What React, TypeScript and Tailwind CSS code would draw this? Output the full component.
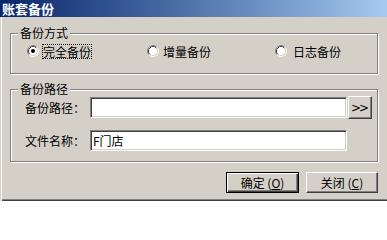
import React from "react";

const font = { fontFamily: '"Noto Sans CJK SC", "Liberation Sans", sans-serif' };

function Radio({ checked }: { checked?: boolean }) {
  return (
    <svg width="12" height="12" viewBox="0 0 12 12" className="shrink-0">
      <circle cx="6" cy="6" r="5" fill="#ffffff" />
      <path d="M2.11 9.89 A5.5 5.5 0 0 1 9.89 2.11" stroke="#808080" strokeWidth="1" fill="none" />
      <path d="M9.89 2.11 A5.5 5.5 0 0 1 2.11 9.89" stroke="#ffffff" strokeWidth="1" fill="none" />
      <path d="M2.82 9.18 A4.5 4.5 0 0 1 9.18 2.82" stroke="#404040" strokeWidth="1" fill="none" />
      <path d="M9.18 2.82 A4.5 4.5 0 0 1 2.82 9.18" stroke="#d4d0c8" strokeWidth="1" fill="none" />
      {checked && <circle cx="6" cy="6" r="2" fill="#000000" />}
    </svg>
  );
}

export default function App() {
  return (
    <div className="w-[387px] h-[201px] overflow-hidden bg-[#d4d0c8] text-[12px] text-black flex flex-col" style={font}>
      <div className="h-[17px] shrink-0 bg-gradient-to-r from-[#0a246a] to-[#a6caf0] flex items-center pl-[2px]">
        <span className="text-white font-bold text-[13px] leading-[13px]">账套备份</span>
      </div>
      <div className="flex-1 flex flex-col shadow-[inset_1px_0_0_#d4d0c8,inset_2px_0_0_#ffffff,inset_0_-1px_0_#404040,inset_0_-2px_0_#808080]">
        {/* Group 1 */}
        <div className="relative mt-[16px] ml-[10px] w-[368px] h-[41px] border border-[#808080] shadow-[inset_1px_1px_0_#ffffff,1px_1px_0_#ffffff]">
          <span className="absolute left-[7px] -top-[7px] px-[2px] bg-[#d4d0c8] leading-[12px]">备份方式</span>
          <div className="mt-[9px] pl-[16px] h-[16px] flex items-center">
            <div className="w-[120px] flex items-center">
              <Radio checked />
              <span className="ml-[3px] border border-dotted border-black leading-[13px]">完全备份</span>
            </div>
            <div className="w-[128px] flex items-center">
              <Radio />
              <span className="ml-[3px] border border-transparent leading-[13px]">增量备份</span>
            </div>
            <div className="flex items-center">
              <Radio />
              <span className="ml-[5px] border border-transparent leading-[13px]">日志备份</span>
            </div>
          </div>
        </div>
        {/* Group 2 */}
        <div className="relative mt-[15px] ml-[10px] w-[368px] h-[73px] border border-[#808080] shadow-[inset_1px_1px_0_#ffffff,1px_1px_0_#ffffff]">
          <span className="absolute left-[7px] -top-[7px] px-[2px] bg-[#d4d0c8] leading-[12px]">备份路径</span>
          <div className="mt-[7px] pl-[14px] flex flex-col gap-[12px]">
            <div className="h-[21px] flex items-center">
              <span className="w-[65px] leading-[12px]">备份路径：</span>
              <div className="w-[257px] h-[21px] bg-white border border-t-[#808080] border-l-[#808080] border-r-white border-b-white shadow-[inset_1px_1px_0_#404040,inset_-1px_-1px_0_#d4d0c8]" />
              <div className="ml-[1px] w-[24px] h-[23px] flex items-center justify-center border border-t-white border-l-white border-r-[#404040] border-b-[#404040] shadow-[inset_-1px_-1px_0_#808080] text-[12px] leading-[12px] tracking-[-2px] pr-[2px]" style={{ fontFamily: '"DejaVu Sans", sans-serif' }}>
                &gt;&gt;
              </div>
            </div>
            <div className="h-[21px] flex items-center">
              <span className="w-[65px] leading-[12px]">文件名称：</span>
              <div className="w-[257px] h-[21px] bg-white border border-t-[#808080] border-l-[#808080] border-r-white border-b-white shadow-[inset_1px_1px_0_#404040,inset_-1px_-1px_0_#d4d0c8] flex items-center pl-[2px] leading-[12px]">
                F门店
              </div>
            </div>
          </div>
        </div>
        {/* Buttons */}
        <div className="mt-[10px] ml-[226px] flex gap-[7px]">
          <div className="w-[73px] h-[21px] border border-black shadow-[inset_1px_1px_0_#ffffff,inset_-1px_-1px_0_#404040,inset_-2px_-2px_0_#808080] flex items-center justify-center leading-[12px]">
            确定 (<span className="underline">O</span>)
          </div>
          <div className="w-[72px] h-[21px] border border-t-white border-l-white border-r-[#404040] border-b-[#404040] shadow-[inset_-1px_-1px_0_#808080] flex items-center justify-center leading-[12px]">
            关闭 (<span className="underline">C</span>)
          </div>
        </div>
      </div>
    </div>
  );
}
